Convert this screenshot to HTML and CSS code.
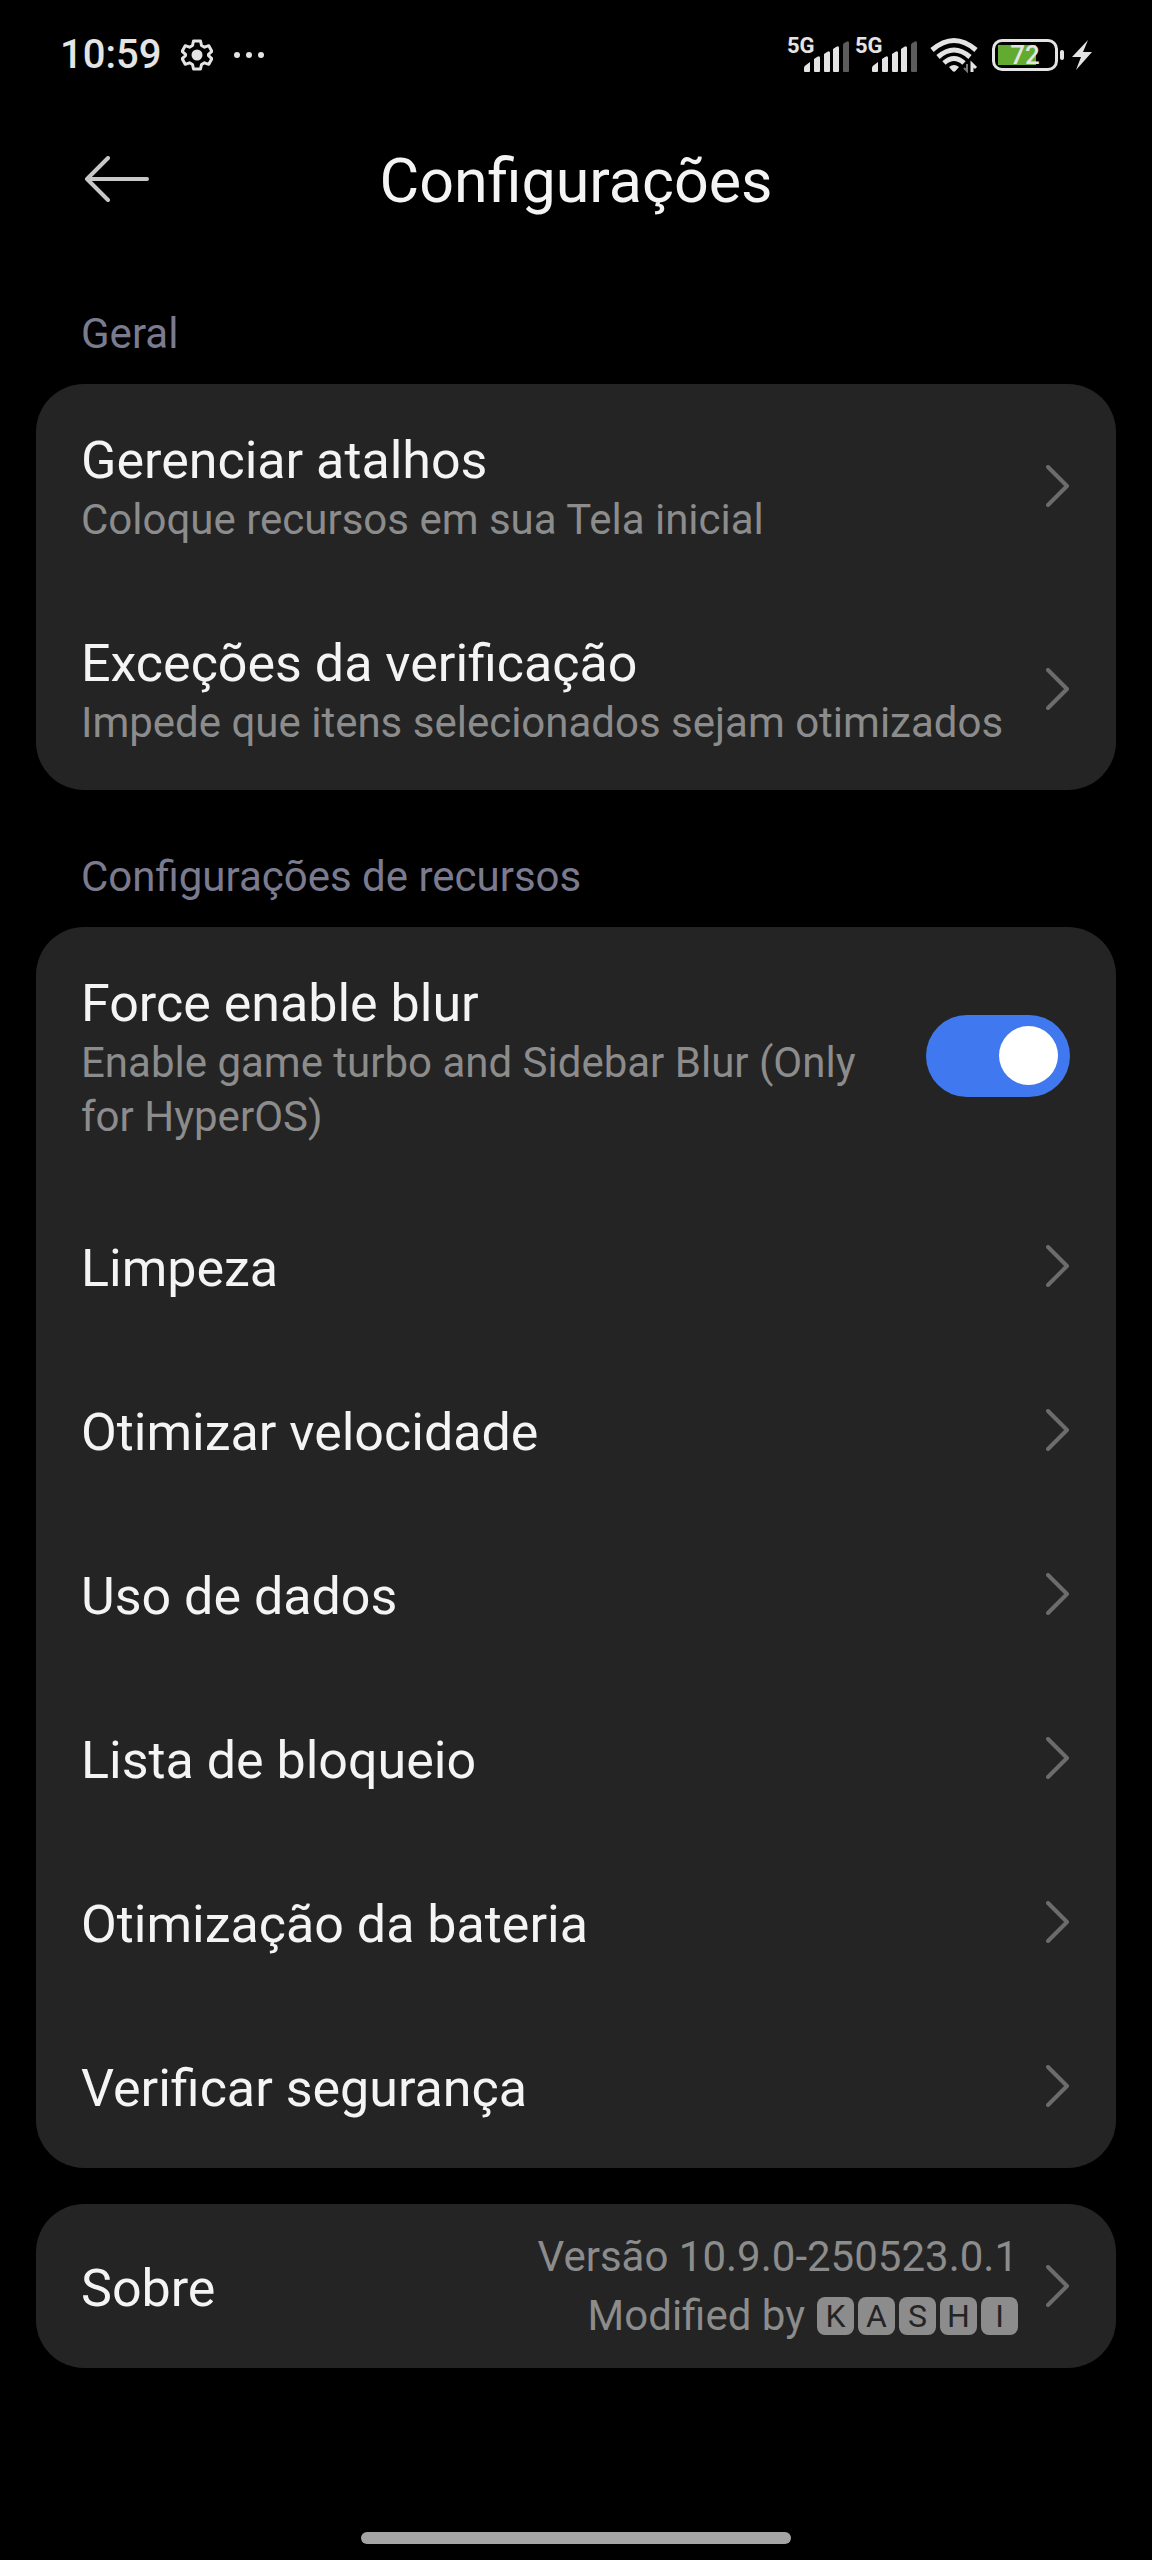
FILE: index.html
```
<!DOCTYPE html>
<html lang="pt-BR">
<head>
  <meta charset="UTF-8">
  <meta name="viewport" content="width=device-width, initial-scale=1.0">
  <title>Configurações</title>
  <link rel="stylesheet" href="styles.css">
</head>
<body>
  <!-- shared icons -->
  <svg class="sprite" aria-hidden="true">
    <symbol id="chevron" viewBox="0 0 24 42">
      <path d="M2 2 L21 21 L2 40" fill="none" stroke="currentColor" stroke-width="4" stroke-linecap="round" stroke-linejoin="round"/>
    </symbol>
    <symbol id="signal" viewBox="0 0 62 36">
      <path d="M16 34v-3q0-2 2-3l4-3v9q0 1-1 1h-4q-1 0-1-1z" fill="#e4e4e4"/>
      <path d="M26 34V22l3-2q3-2 3 1v13q0 1-1 1h-4q-1 0-1-1z" fill="#e4e4e4"/>
      <path d="M36 34V17l3-2q3-2 3 1v18q0 1-1 1h-4q-1 0-1-1z" fill="#e4e4e4"/>
      <path d="M45 34V12l3-2q3-2 3 1v23q0 1-1 1h-4q-1 0-1-1z" fill="#e4e4e4"/>
      <path d="M55 34V8q0-2 3-3 3-2 3 1v28q0 1-1 1h-4q-1 0-1-1z" fill="#5c5c5c"/>
    </symbol>
  </svg>

  <div class="status-bar">
    <div class="status-left">
      <span class="clock">10:59</span>
      <svg class="gear" viewBox="0 0 32 32">
        <path d="M12.500 2h7l1 4.500 3 1.700 4.300-1.500 3 5.600-3.300 3v1.400l3.300 3-3 5.600-4.300-1.500-3 1.700-1 4.500h-7l-1-4.500-3-1.700-4.300 1.500-3-5.600 3.300-3v-1.400l-3.300-3 3-5.600 4.300 1.500 3-1.700z" fill="none" stroke="#e4e4e4" stroke-width="3" stroke-linejoin="round"/>
        <circle cx="16" cy="16" r="5.500" fill="#e4e4e4"/>
      </svg>
      <svg class="dots" viewBox="0 0 32 8" fill="#e4e4e4">
        <circle cx="4" cy="4" r="3"/><circle cx="16" cy="4" r="3"/><circle cx="28" cy="4" r="3"/>
      </svg>
    </div>
    <div class="status-right">
      <div class="signal"><span>5G</span><svg><use href="#signal"/></svg></div>
      <div class="signal"><span>5G</span><svg><use href="#signal"/></svg></div>
      <svg class="wifi" viewBox="0 0 48 36">
        <g fill="none" stroke="#e4e4e4" stroke-width="5">
          <path d="M2 13Q24-6 46 13"/>
          <path d="M8 20Q24 6 40 20"/>
          <path d="M14 26Q24 17 34 26"/>
        </g>
        <path d="M19 30q5-4 10 0l-3.500 4q-1.500 1.500-3 0z" fill="#e4e4e4"/>
        <path d="M37 27v7l-3-3" fill="none" stroke="#777" stroke-width="2"/>
        <path d="M42 35v-8l4 4" fill="none" stroke="#e4e4e4" stroke-width="3"/>
      </svg>
      <div class="battery"><span>72</span></div>
      <svg class="bolt" viewBox="0 0 20 32">
        <path d="M16 1L0 18h9L4 31 20 13h-9z" fill="#e4e4e4"/>
      </svg>
    </div>
  </div>

  <header class="app-bar">
    <button type="button" class="back" aria-label="Voltar">
      <svg viewBox="0 0 66 46">
        <path d="M24 2L3 23l21 21M3 23h60" fill="none" stroke="#c8c8c8" stroke-width="4" stroke-linecap="round" stroke-linejoin="round"/>
      </svg>
    </button>
    <h1>Configurações</h1>
  </header>

  <main>
    <h2>Geral</h2>
    <div class="card">
      <a class="row" href="#">
        <span class="text">
          <span class="name">Gerenciar atalhos</span>
          <span class="desc">Coloque recursos em sua Tela inicial</span>
        </span>
        <svg class="chevron"><use href="#chevron"/></svg>
      </a>
      <a class="row" href="#">
        <span class="text">
          <span class="name">Exceções da verificação</span>
          <span class="desc">Impede que itens selecionados sejam otimizados</span>
        </span>
        <svg class="chevron"><use href="#chevron"/></svg>
      </a>
    </div>

    <h2>Configurações de recursos</h2>
    <div class="card">
      <label class="row" for="blur">
        <span class="text">
          <span class="name">Force enable blur</span>
          <span class="desc">Enable game turbo and Sidebar Blur (Only for HyperOS)</span>
        </span>
        <input type="checkbox" class="switch" id="blur" checked>
      </label>
      <a class="row" href="#">
        <span class="text"><span class="name">Limpeza</span></span>
        <svg class="chevron"><use href="#chevron"/></svg>
      </a>
      <a class="row" href="#">
        <span class="text"><span class="name">Otimizar velocidade</span></span>
        <svg class="chevron"><use href="#chevron"/></svg>
      </a>
      <a class="row" href="#">
        <span class="text"><span class="name">Uso de dados</span></span>
        <svg class="chevron"><use href="#chevron"/></svg>
      </a>
      <a class="row" href="#">
        <span class="text"><span class="name">Lista de bloqueio</span></span>
        <svg class="chevron"><use href="#chevron"/></svg>
      </a>
      <a class="row" href="#">
        <span class="text"><span class="name">Otimização da bateria</span></span>
        <svg class="chevron"><use href="#chevron"/></svg>
      </a>
      <a class="row" href="#">
        <span class="text"><span class="name">Verificar segurança</span></span>
        <svg class="chevron"><use href="#chevron"/></svg>
      </a>
    </div>

    <div class="card about">
      <a class="row" href="#">
        <span class="text"><span class="name">Sobre</span></span>
        <span class="value">
          <span>Versão 10.9.0-250523.0.1</span>
          <span class="author">Modified by <span class="tiles"><b>K</b><b>A</b><b>S</b><b>H</b><b>I</b></span></span>
        </span>
        <svg class="chevron"><use href="#chevron"/></svg>
      </a>
    </div>
  </main>

  <div class="home-bar"></div>
</body>
</html>
```

FILE: styles.css
```
* { box-sizing: border-box; }
body {
  display: flex;
  flex-direction: column;
  min-height: 100vh;
  margin: 0;
  background: #000;
  color: #f4f4f4;
  font-family: Roboto, "Liberation Sans", sans-serif;
  font-size: 42px;
  line-height: 54px;
}
svg { display: block; flex: none; }
.sprite { position: absolute; width: 0; height: 0; }

/* status bar */
.status-bar {
  display: flex;
  justify-content: space-between;
  align-items: center;
  height: 110px;
  padding: 0 60px;
  color: #e4e4e4;
}
.status-left, .status-right { display: flex; align-items: center; }
.status-left { gap: 20px; }
.status-right { gap: 6px; }
.clock { font-size: 40px; font-weight: 500; }
.gear { width: 32px; height: 32px; }
.dots { width: 32px; height: 8px; }
.signal { position: relative; }
.signal svg { width: 62px; height: 36px; }
.signal span {
  position: absolute;
  top: -2px;
  left: -1px;
  font-size: 22px;
  line-height: 22px;
  font-weight: 700;
}
.wifi { width: 48px; height: 36px; margin-left: 6px; }
.battery {
  position: relative;
  width: 66px;
  height: 32px;
  margin: 0 8px;
  border: 3px solid #e4e4e4;
  border-radius: 10px;
  background: linear-gradient(#62ab30, #62ab30) 3px 3px / 38px 20px no-repeat;
  font-size: 26px;
  line-height: 26px;
  font-weight: 500;
  text-align: center;
}
.battery::after {
  content: "";
  position: absolute;
  top: 8px;
  right: -9px;
  width: 4px;
  height: 10px;
  border-radius: 2px;
  background: #e4e4e4;
}
.bolt { width: 20px; height: 32px; }

/* title */
.app-bar {
  display: grid;
  grid-template-columns: 66px 1fr 66px;
  align-items: center;
  height: 137px;
  padding: 0 84px;
}
.back { padding: 0; border: 0; background: none; cursor: pointer; }
.back svg { width: 66px; height: 46px; }
h1 {
  margin: 0;
  padding-top: 4px;
  font-size: 61px;
  line-height: 72px;
  font-weight: 400;
  text-align: center;
}

/* lists */
main { flex: 1; padding: 0 36px; }
h2 {
  margin: 0;
  padding: 60px 45px 23px;
  color: #7b7b90;
  font-size: 42px;
  font-weight: 400;
}
.card {
  overflow: hidden;
  border-radius: 48px;
  background: #242424;
}
.about { margin-top: 36px; }
.row {
  display: flex;
  align-items: center;
  min-height: 164px;
  padding: 40px 46px 40px 45px;
  color: inherit;
  text-decoration: none;
}
.text { flex: 1; padding-top: 5px; }
.name, .desc { display: block; }
.name { font-size: 52px; line-height: 64px; }
.desc { color: #8c8c8c; }
.chevron { width: 24px; height: 42px; margin-left: 28px; color: #6c6c6c; }
.switch {
  appearance: none;
  flex: none;
  display: flex;
  align-items: center;
  justify-content: flex-start;
  width: 144px;
  height: 82px;
  margin: 0 0 0 40px;
  padding: 12px;
  border-radius: 41px;
  background: #505050;
}
.switch::before {
  content: "";
  width: 59px;
  height: 59px;
  border-radius: 50%;
  background: #fff;
}
.switch:checked { justify-content: flex-end; background: #4079ef; }

.about .row { padding-top: 23px; padding-bottom: 23px; }
.value {
  display: flex;
  flex-direction: column;
  align-items: flex-end;
  color: #8c8c8c;
  line-height: 59px;
}
.author { display: flex; align-items: center; gap: 12px; }
.tiles { display: flex; gap: 4px; }
.tiles b {
  width: 37px;
  height: 38px;
  border-radius: 8px;
  background: #8c8c8c;
  color: #242424;
  font-size: 32px;
  line-height: 38px;
  font-weight: 400;
  text-align: center;
}

.home-bar {
  width: 430px;
  height: 12px;
  margin: 0 auto 16px;
  border-radius: 6px;
  background: #a4a4a4;
}
```
